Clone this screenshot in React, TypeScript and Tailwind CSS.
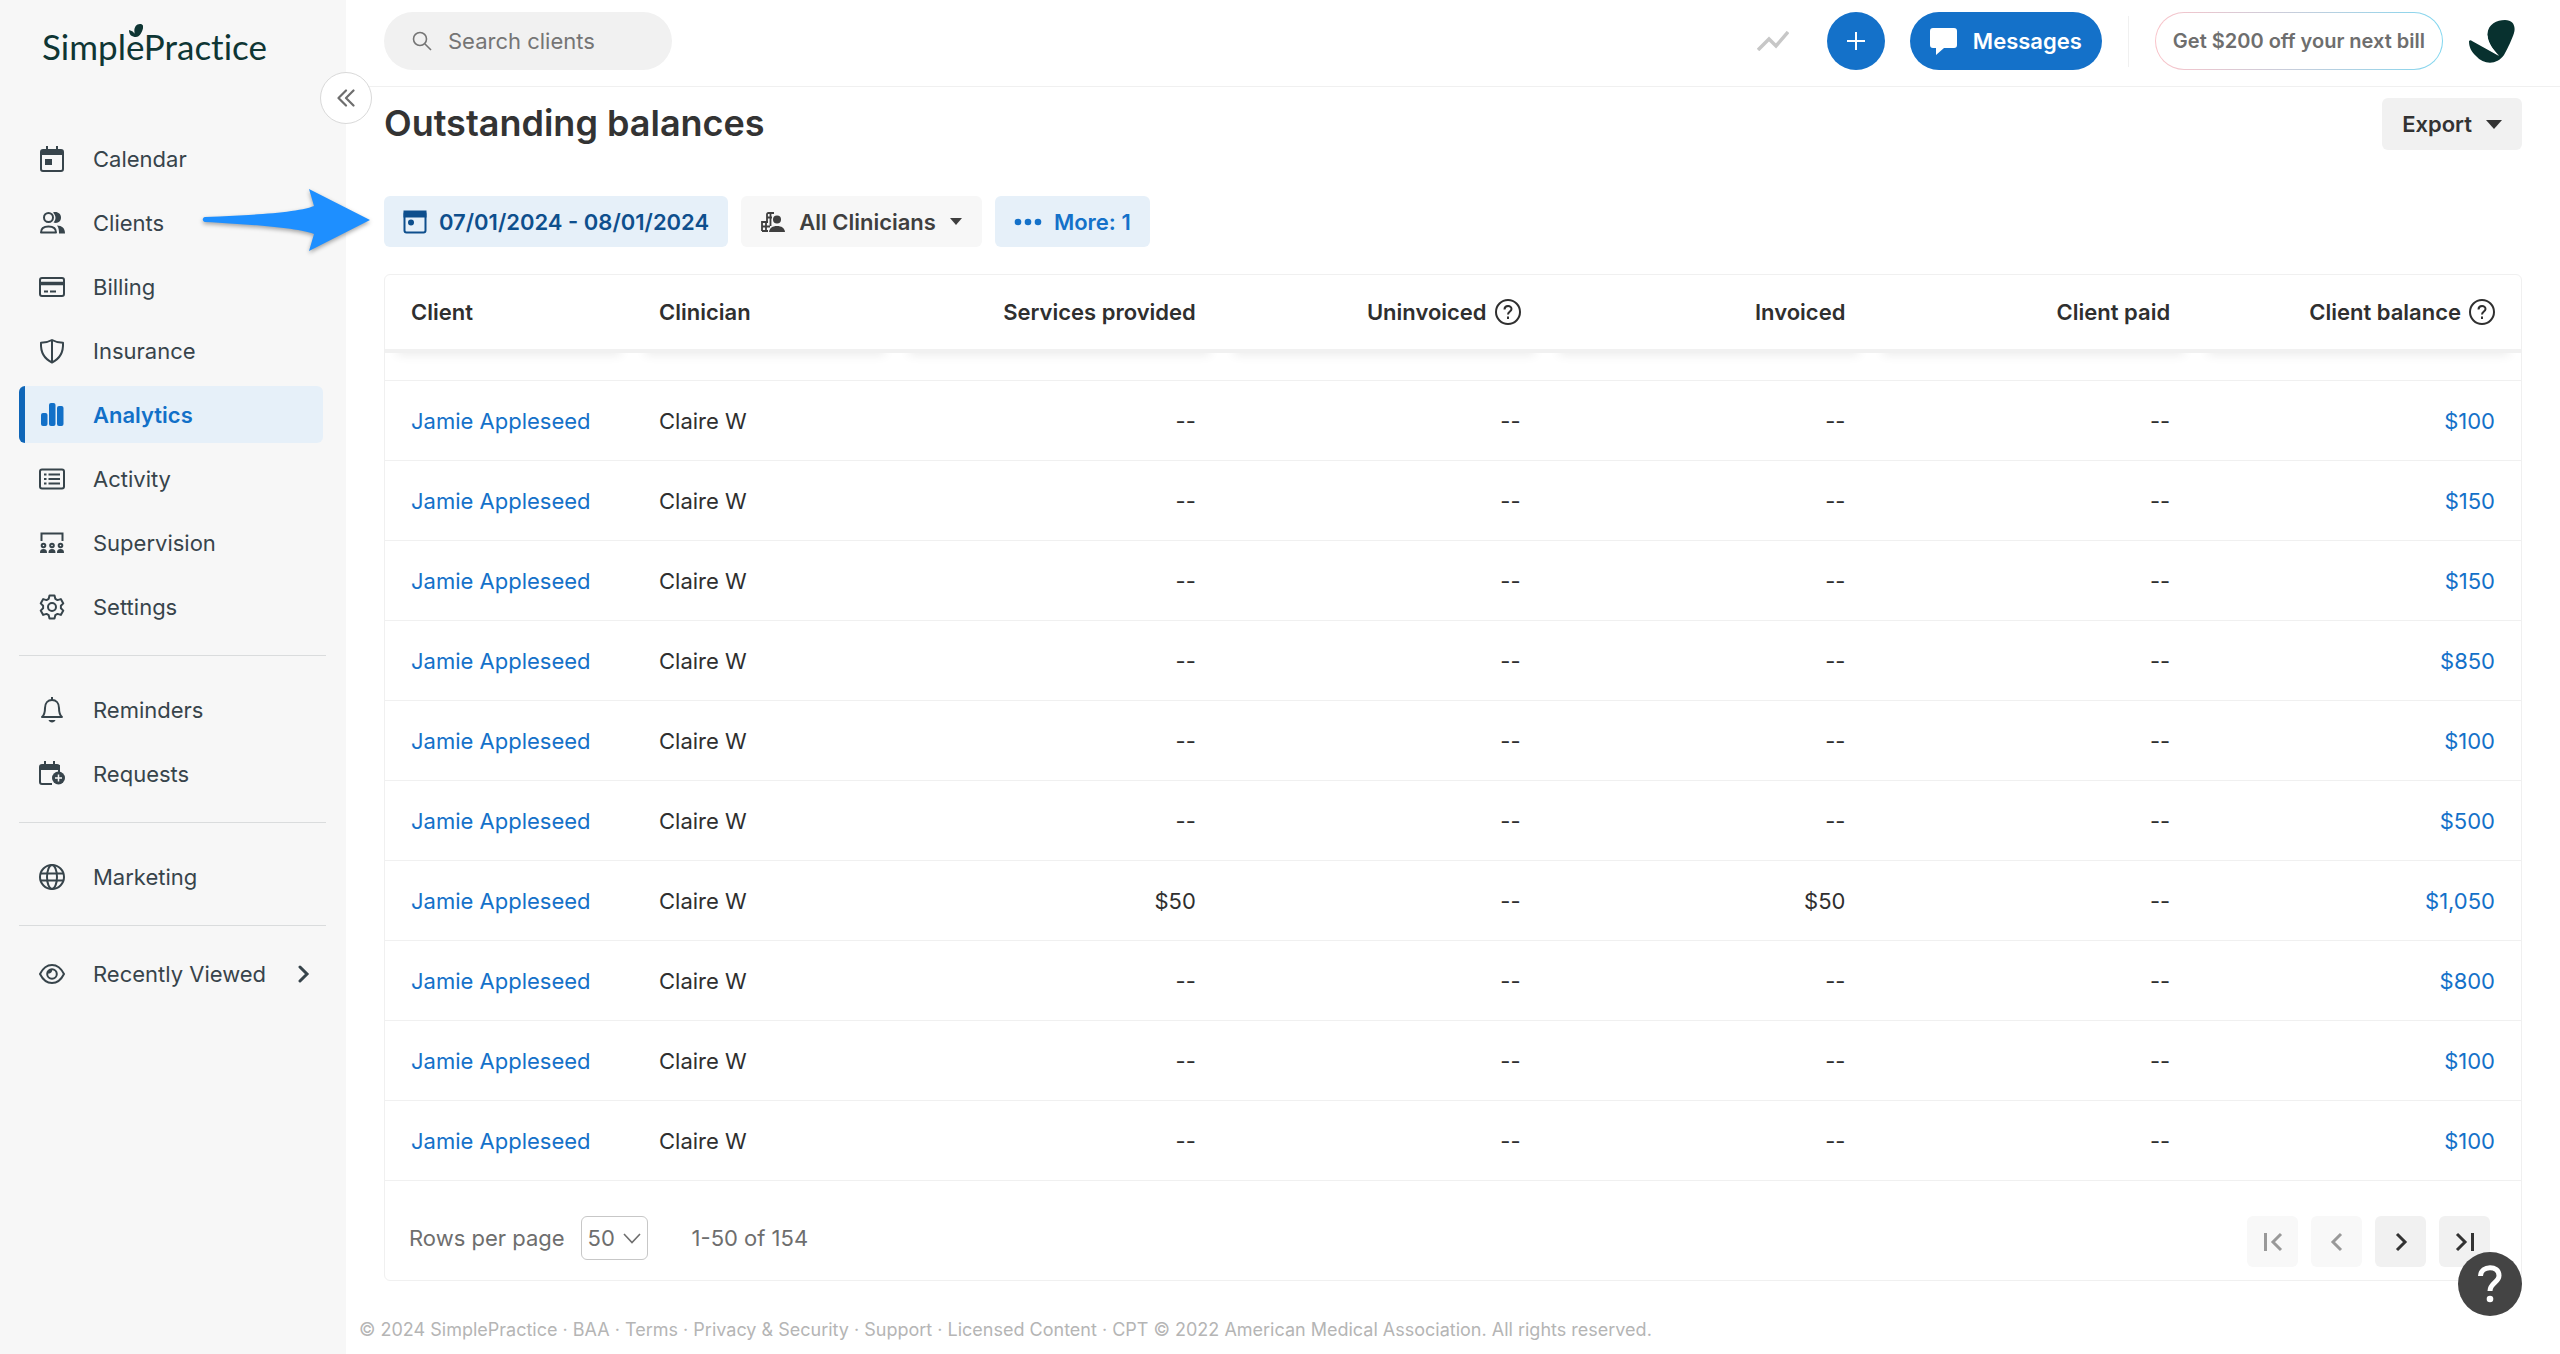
import type { ReactNode } from "react";

const balances = [
  { services: "--", invoiced: "--", balance: "$100" },
  { services: "--", invoiced: "--", balance: "$150" },
  { services: "--", invoiced: "--", balance: "$150" },
  { services: "--", invoiced: "--", balance: "$850" },
  { services: "--", invoiced: "--", balance: "$100" },
  { services: "--", invoiced: "--", balance: "$500" },
  { services: "$50", invoiced: "$50", balance: "$1,050" },
  { services: "--", invoiced: "--", balance: "$800" },
  { services: "--", invoiced: "--", balance: "$100" },
  { services: "--", invoiced: "--", balance: "$100" },
];

const columns = [
  { label: "Client", align: "text-left" },
  { label: "Clinician", align: "text-left" },
  { label: "Services provided", align: "text-right" },
  { label: "Uninvoiced", align: "text-right", help: true },
  { label: "Invoiced", align: "text-right" },
  { label: "Client paid", align: "text-right" },
  { label: "Client balance", align: "text-right", help: true },
];

const footerLinks = ["BAA", "Terms", "Privacy & Security", "Support", "Licensed Content"];

function Icon({ children }: { children: ReactNode }) {
  return (
    <svg
      viewBox="0 0 26 26"
      className="size-[26px] shrink-0"
      fill="none"
      stroke="currentColor"
      strokeWidth="2"
      aria-hidden="true"
    >
      {children}
    </svg>
  );
}

function CalendarIcon() {
  return (
    <Icon>
      <rect x="2" y="4" width="22" height="21" rx="2" />
      <path d="M2 4h22v5H2z" fill="currentColor" stroke="none" />
      <path d="M8 0v5M18 0v5" />
      <rect x="6" y="13" width="7" height="6" fill="currentColor" stroke="none" />
    </Icon>
  );
}

function ClientsIcon() {
  return (
    <Icon>
      <circle cx="9.5" cy="7.5" r="4.5" />
      <path d="M2 22.500c0-4.500 3-6 7.500-6s7.500 1.500 7.500 6z" strokeLinejoin="round" />
      <path
        d="M14 2.500c4-1.500 8 1 8 5s-3.500 6.500-7.500 5c3-3 2.500-7-.5-10zM18 15.500c5 .2 8 2.500 8 8h-6c0-3.500-.2-5.500-2-8z"
        fill="currentColor"
        stroke="none"
      />
    </Icon>
  );
}

function BillingIcon() {
  return (
    <Icon>
      <rect x="1" y="4" width="24" height="18" rx="2" />
      <path d="M1 9.500h24" strokeWidth="3.500" />
      <path d="M5 17.500h4M11 17.500h6" />
    </Icon>
  );
}

function InsuranceIcon() {
  return (
    <Icon>
      <path
        d="M13 2c3.500 2 7 2.800 11 2.800C24.500 14 21.500 20.500 13 24.500 4.500 20.500 1.500 14 2 4.800 6 4.800 9.500 4 13 2zM13 2v22"
        strokeLinejoin="round"
      />
    </Icon>
  );
}

function AnalyticsIcon() {
  return (
    <Icon>
      <g fill="currentColor" stroke="none">
        <rect x="2" y="11" width="6.500" height="13" rx="2" />
        <rect x="10" y="1" width="6.500" height="23" rx="2" />
        <rect x="18" y="4" width="6.500" height="20" rx="2" />
      </g>
    </Icon>
  );
}

function ActivityIcon() {
  return (
    <Icon>
      <rect x="1" y="3.500" width="24" height="19" rx="2" />
      <path d="M5 8.500h2.500M5 13h2.500M5 17.500h2.500M9.500 8.500H21M9.500 13H21M9.500 17.500H21" />
    </Icon>
  );
}

function SupervisionIcon() {
  return (
    <Icon>
      <path d="M2.500 11V3.500h21V11" />
      <circle cx="4.500" cy="15.500" r="1.800" />
      <circle cx="13" cy="15.500" r="1.800" />
      <circle cx="21.500" cy="15.500" r="1.800" />
      <path
        d="M1 23c0-3 1-4 3.500-4s3.500 1 3.500 4zM9.500 23c0-3 1-4 3.500-4s3.500 1 3.500 4zM18 23c0-3 1-4 3.500-4s3.500 1 3.500 4z"
        fill="currentColor"
        stroke="none"
      />
    </Icon>
  );
}

function SettingsIcon() {
  return (
    <Icon>
      <path
        d="M10.500 1.500h5l.8 3.300 2.200 1.300 3.300-1 2.500 4.300-2.400 2.400v2.400l2.400 2.400-2.500 4.300-3.300-1-2.200 1.300-.8 3.300h-5l-.8-3.300-2.200-1.300-3.300 1-2.500-4.300 2.400-2.400v-2.400L1.700 9.400l2.500-4.300 3.300 1 2.200-1.300z"
        strokeLinejoin="round"
      />
      <circle cx="13" cy="13" r="4" />
    </Icon>
  );
}

function RemindersIcon() {
  return (
    <Icon>
      <path d="M3 20c2.500-2 3-4.500 3-9 0-5 3-8 7-8s7 3 7 8c0 4.500.5 7 3 9z" strokeLinejoin="round" />
      <path d="M13 0v3" />
      <path d="M9.500 23h7c-.8 3.300-6.200 3.300-7 0z" fill="currentColor" stroke="none" />
    </Icon>
  );
}

function RequestsIcon() {
  return (
    <Icon>
      <path d="M20 11V6a2 2 0 0 0-2-2H3a2 2 0 0 0-2 2v15a2 2 0 0 0 2 2h10" />
      <path d="M1 4h20v5H1z" fill="currentColor" stroke="none" />
      <path d="M6 0v5M15 0v5" />
      <circle cx="19.500" cy="17" r="6.500" fill="currentColor" stroke="none" />
      <path d="M19.500 13.500v7M16 17h7" stroke="#f7f7f7" strokeWidth="1.500" />
    </Icon>
  );
}

function MarketingIcon() {
  return (
    <Icon>
      <circle cx="13" cy="13" r="12" />
      <ellipse cx="13" cy="13" rx="5" ry="12" />
      <path d="M2 9.500h22M2 16.500h22" />
    </Icon>
  );
}

function RecentIcon() {
  return (
    <Icon>
      <path d="M1 13c6-12 18-12 24 0-6 12-18 12-24 0z" strokeLinejoin="round" />
      <circle cx="13" cy="13" r="4.800" />
      <path d="M8 12.500c0-3 2-4.500 5-4.500.5 3-1 5-5 4.500z" fill="currentColor" stroke="none" />
    </Icon>
  );
}

function HelpIcon() {
  return (
    <Icon>
      <circle cx="13" cy="13" r="12" />
      <path d="M9.500 10.500c0-4.500 7-4.500 7-.5 0 2.500-3.500 2.500-3.500 5.500" />
      <path d="M13 17.500v2.500" />
    </Icon>
  );
}

const navGroups = [
  [
    { label: "Calendar", icon: <CalendarIcon /> },
    { label: "Clients", icon: <ClientsIcon /> },
    { label: "Billing", icon: <BillingIcon /> },
    { label: "Insurance", icon: <InsuranceIcon /> },
    { label: "Analytics", icon: <AnalyticsIcon />, active: true },
    { label: "Activity", icon: <ActivityIcon /> },
    { label: "Supervision", icon: <SupervisionIcon /> },
    { label: "Settings", icon: <SettingsIcon /> },
  ],
  [
    { label: "Reminders", icon: <RemindersIcon /> },
    { label: "Requests", icon: <RequestsIcon /> },
  ],
  [{ label: "Marketing", icon: <MarketingIcon /> }],
];

function Sidebar() {
  return (
    <aside className="relative w-[346px] shrink-0 bg-[#f7f7f7] text-[#37444b]">
      <a
        href="#"
        className="relative ml-[42px] mt-6 block w-fit font-['Lato',sans-serif] text-[35px] leading-[44px] text-[#0f3634] [font-variant-ligatures:none]"
      >
        SimplePractice
        <svg viewBox="0 0 14 13" className="absolute left-[87px] top-0 h-[13px] w-[14px]" fill="currentColor" aria-hidden="true">
          <path d="M7 13C4 8 5 0 11 0c3 0 4 2 2.500 6C12 10 10 13 7 13zM0 6c4 1 6 3 7 7-4 0-7-2-7-7z" />
        </svg>
      </a>
      <button
        type="button"
        aria-label="Collapse sidebar"
        className="absolute -right-[26px] top-[72px] z-10 flex size-[52px] items-center justify-center rounded-full border border-[#d9d9d9] bg-white text-[#6e6e6e]"
      >
        <svg viewBox="0 0 18 18" className="size-[18px]" fill="none" stroke="currentColor" strokeWidth="2.200" strokeLinecap="round" strokeLinejoin="round">
          <path d="M9 1.500 1.500 9 9 16.500M16.500 1.500 9 9l7.500 7.500" />
        </svg>
      </button>

      <nav className="mt-[62px] flex flex-col">
        {navGroups.map((group, i) => (
          <div key={i} className="mb-[25px] flex flex-col last-of-type:mb-[19px]">
            <ul className="flex flex-col gap-[7px] pl-[19px] pr-[23px]">
              {group.map((item) => (
                <li key={item.label}>
                  <a
                    href="#"
                    className={`flex h-[57px] items-center gap-7 rounded-md border-l-6 pl-3.5 ${
                      item.active
                        ? "border-[#0f66b8] bg-[#e6f0f9] font-semibold text-[#1270c8]"
                        : "border-transparent"
                    }`}
                  >
                    {item.icon}
                    {item.label}
                  </a>
                </li>
              ))}
            </ul>
            <hr className="ml-[19px] mr-5 mt-5 border-[#dadcdd]" />
          </div>
        ))}
        <button type="button" className="mx-[19px] flex h-[57px] items-center gap-7 pl-5">
          <RecentIcon />
          Recently Viewed
          <svg viewBox="0 0 12 18" className="ml-1 h-[18px] w-3" fill="none" stroke="currentColor" strokeWidth="3" strokeLinecap="round">
            <path d="m2 2 7 7-7 7" />
          </svg>
        </button>
      </nav>
    </aside>
  );
}

function Header() {
  return (
    <header className="flex h-[87px] items-center border-b border-[#f0f0f0] pb-1 pl-[38px] pr-[45px]">
      <label className="flex h-[58px] w-[288px] items-center gap-4 rounded-full bg-[#f1f1f1] px-7 text-[#757575]">
        <svg viewBox="0 0 20 20" className="size-5 shrink-0" fill="none" stroke="currentColor" strokeWidth="1.600" aria-hidden="true">
          <circle cx="8" cy="8" r="6.500" />
          <path d="m13 13 6 6" />
        </svg>
        <input
          type="text"
          aria-label="Search clients"
          placeholder="Search clients"
          className="w-full min-w-0 bg-transparent outline-none placeholder:text-[#757575]"
        />
      </label>
      <div className="ml-auto flex items-center">
        <button type="button" aria-label="Trends" className="text-[#c7c7c7]">
          <svg viewBox="0 0 32 20" className="h-5 w-8" fill="none" stroke="currentColor" strokeWidth="3.500">
            <path d="M1 19 12 8l7 7L31 1" />
          </svg>
        </button>
        <button
          type="button"
          aria-label="Create"
          className="ml-[38px] flex size-[58px] items-center justify-center rounded-full bg-[#1471c9] text-white"
        >
          <svg viewBox="0 0 18 18" className="size-[18px]" fill="none" stroke="currentColor" strokeWidth="2">
            <path d="M9 0v18M0 9h18" />
          </svg>
        </button>
        <button
          type="button"
          className="ml-[25px] flex h-[58px] items-center gap-4 rounded-full bg-[#1471c9] px-5 font-semibold text-white"
        >
          <svg viewBox="0 0 27 27" className="size-[27px]" fill="currentColor" aria-hidden="true">
            <path d="M3 0h21a3 3 0 0 1 3 3v14a3 3 0 0 1-3 3H14l-8 7v-7H3a3 3 0 0 1-3-3V3a3 3 0 0 1 3-3z" />
          </svg>
          Messages
        </button>
        <div className="ml-[26px] h-[51px] w-px bg-[#f0f0f0]" />
        <div className="ml-[26px] rounded-full bg-linear-to-r from-[#f9c3c9] to-[#7fd6ef] p-px">
          <button type="button" className="h-14 rounded-full bg-white px-[17px] text-[20px] font-semibold text-[#6e6e6e]">
            Get $200 off your next bill
          </button>
        </div>
        <a href="#" aria-label="Account" className="ml-[26px] text-[#08312f]">
          <svg viewBox="0 0 46 43" className="h-[43px] w-[46px]" fill="currentColor">
            <path d="M30 36C23 29 18 22 18.500 14 19 4 28 0 36 0c8 0 11 6 9 13-2 6-6 15-10 22C28 45 15 45 7 36 2 31 0 27 0 21c1-1 2-1 3 0z" />
            <path d="m3 20 27 15.500c-6-6-11-13-11.500-20z" fill="#fff" />
          </svg>
        </a>
      </div>
    </header>
  );
}

function Filters() {
  return (
    <div className="relative mt-[46px] flex gap-[13px] font-semibold">
      {/* Pointer at the date range filter */}
      <svg
        viewBox="0 0 170 64"
        className="absolute -top-[7px] right-full z-20 mr-[12px] h-16 w-[170px] drop-shadow-[0_2px_2px_rgba(0,0,0,0.35)]"
        fill="#1e8fff"
        aria-hidden="true"
      >
        <path d="M3 28c40-1.500 92-4 109-11L107 0l61 31-61 31 5-17C92 38 40 35 3 33c-3-.5-3-4.500 0-5z" />
      </svg>
      <button type="button" className="flex h-[51px] items-center gap-3 rounded-md bg-[#e6f0f9] px-[19px] text-[#0e4f8d]">
        <svg viewBox="0 0 24 24" className="size-6" fill="none" stroke="currentColor" strokeWidth="2" aria-hidden="true">
          <rect x="1.500" y="2" width="21" height="20.500" rx="2" />
          <path d="M1.500 1.500h21v5h-21z" fill="currentColor" />
          <circle cx="8" cy="12.500" r="3" fill="currentColor" stroke="none" />
        </svg>
        07/01/2024 - 08/01/2024
      </button>
      <button type="button" className="flex h-[51px] items-center gap-3.5 rounded-md bg-[#f7f7f7] px-5 text-[#3f3f3f]">
        <svg viewBox="0 0 24 20" className="h-5 w-6" fill="currentColor" aria-hidden="true">
          <path
            d="M6 9V2.500C6 1.500 6.500 1 7.500 1H13M1 19V10h6M1 19h6M1 14.500h8M6 5.500h5M9.500 1v13M5 10v9"
            fill="none"
            stroke="currentColor"
            strokeWidth="1.800"
          />
          <circle cx="16" cy="7.500" r="4" />
          <path d="M8 20c.5-4 3.500-6 8-6s7.500 2 8 6z" />
        </svg>
        All Clinicians
        <svg viewBox="0 0 12 7" className="h-[7px] w-3" fill="currentColor" aria-hidden="true">
          <path d="M0 0h12L6 7z" />
        </svg>
      </button>
      <button type="button" className="flex h-[51px] items-center gap-3 rounded-md bg-[#e6f0f9] px-[19px] text-[#1471c9]">
        <svg viewBox="0 0 28 8" className="h-2 w-7" fill="currentColor" aria-hidden="true">
          <circle cx="4" cy="4" r="3.300" />
          <circle cx="14" cy="4" r="3.300" />
          <circle cx="24" cy="4" r="3.300" />
        </svg>
        More: 1
      </button>
    </div>
  );
}

function BalancesTable() {
  return (
    <table className="w-full table-fixed border-separate border-spacing-0">
      <colgroup>
        <col className="w-[248px]" />
        <col className="w-[264px]" />
        <col />
        <col />
        <col />
        <col />
        <col />
      </colgroup>
      <thead>
        <tr>
          {columns.map((col) => (
            <th
              key={col.label}
              className={`h-[78px] border-b-4 border-[#f1f1f1] px-[26px] font-semibold shadow-[0_14px_10px_-12px_rgba(0,0,0,0.08)] ${col.align}`}
            >
              <span className="inline-flex items-center gap-2">
                {col.label}
                {col.help && <HelpIcon />}
              </span>
            </th>
          ))}
        </tr>
      </thead>
      <tbody>
        <tr>
          <td colSpan={7} className="h-7 border-b border-[#f0f0f0]" />
        </tr>
        {balances.map((row, i) => (
          <tr key={i} className="h-20 *:border-b *:border-[#f0f0f0] *:px-[26px]">
            <td>
              <a href="#" className="text-[#1471c9]">
                Jamie Appleseed
              </a>
            </td>
            <td>Claire W</td>
            <td className="text-right">{row.services}</td>
            <td className="text-right">--</td>
            <td className="text-right">{row.invoiced}</td>
            <td className="text-right">--</td>
            <td className="text-right">
              <a href="#" className="text-[#1471c9]">
                {row.balance}
              </a>
            </td>
          </tr>
        ))}
      </tbody>
    </table>
  );
}

function PageButton({ label, path, disabled }: { label: string; path: string; disabled?: boolean }) {
  return (
    <button
      type="button"
      aria-label={label}
      disabled={disabled}
      className="flex size-[51px] items-center justify-center rounded-md bg-[#f1f1f1] text-[#333] disabled:bg-[#f8f8f8] disabled:text-[#999]"
    >
      <svg viewBox="0 0 20 20" className="size-5" fill="none" stroke="currentColor" strokeWidth="3">
        <path d={path} />
      </svg>
    </button>
  );
}

function Pagination() {
  return (
    <div className="flex h-[99px] items-center pl-6 pr-[31px] pt-[22px] text-[#6e6e6e]">
      <div className="flex items-center pb-2">
        <label htmlFor="rows-per-page">Rows per page</label>
        <div className="relative ml-4">
          <select
            id="rows-per-page"
            defaultValue="50"
            className="h-11 w-[67px] appearance-none rounded-md border border-[#c7c7c7] bg-white pl-1.5"
          >
            <option>25</option>
            <option>50</option>
            <option>100</option>
          </select>
          <svg
            viewBox="0 0 18 11"
            className="pointer-events-none absolute right-[7px] top-[17px] h-[11px] w-[18px]"
            fill="none"
            stroke="currentColor"
            strokeWidth="1.600"
          >
            <path d="m1 1 8 8.500L17 1" />
          </svg>
        </div>
        <span className="ml-11">1-50 of 154</span>
      </div>
      <div className="ml-auto flex gap-[13px]">
        <PageButton label="First page" path="M2.500 1v18M18 2l-8 8 8 8" disabled />
        <PageButton label="Previous page" path="m14 2-8 8 8 8" disabled />
        <PageButton label="Next page" path="m6 2 8 8-8 8" />
        <PageButton label="Last page" path="m2 2 8 8-8 8M17.500 1v18" />
      </div>
    </div>
  );
}

export default function App() {
  return (
    <div className="flex min-h-screen bg-white font-['Inter',sans-serif] text-[22px] leading-7 text-[#2f2f2f]">
      <Sidebar />
      <div className="flex min-w-0 flex-1 flex-col">
        <Header />
        <main className="px-[38px] pt-[11px]">
          <div className="flex items-start justify-between">
            <h1 className="text-[36px] font-semibold leading-[50px] text-[#333]">Outstanding balances</h1>
            <button
              type="button"
              className="flex h-[52px] items-center gap-3.5 rounded-md bg-[#f1f1f1] px-5 font-semibold text-[#333]"
            >
              Export
              <svg viewBox="0 0 16 9" className="h-[9px] w-4" fill="currentColor" aria-hidden="true">
                <path d="M0 0h16L8 9z" />
              </svg>
            </button>
          </div>
          <Filters />
          <section className="mt-[27px] rounded-md border border-[#f0f0f0]">
            <BalancesTable />
            <Pagination />
          </section>
        </main>
        <footer className="pl-[13px] pt-[35px] text-[18px] text-[#b5b5b5]">
          © 2024 SimplePractice
          {footerLinks.map((link) => (
            <span key={link}>
              {" · "}
              <a href="#">{link}</a>
            </span>
          ))}
          {" · CPT © 2022 American Medical Association. All rights reserved."}
        </footer>
      </div>
      <button
        type="button"
        aria-label="Help"
        className="fixed bottom-[38px] right-[38px] flex size-16 items-center justify-center rounded-full bg-[#444] text-white"
      >
        <svg viewBox="0 0 24 38" className="h-[38px] w-6" fill="none" stroke="currentColor" strokeWidth="5" aria-hidden="true">
          <path d="M2.500 11C3 0 21 0 21 10.500c0 7-9 7.500-9 15.500" />
          <circle cx="12" cy="34" r="3.300" fill="currentColor" stroke="none" />
        </svg>
      </button>
    </div>
  );
}
